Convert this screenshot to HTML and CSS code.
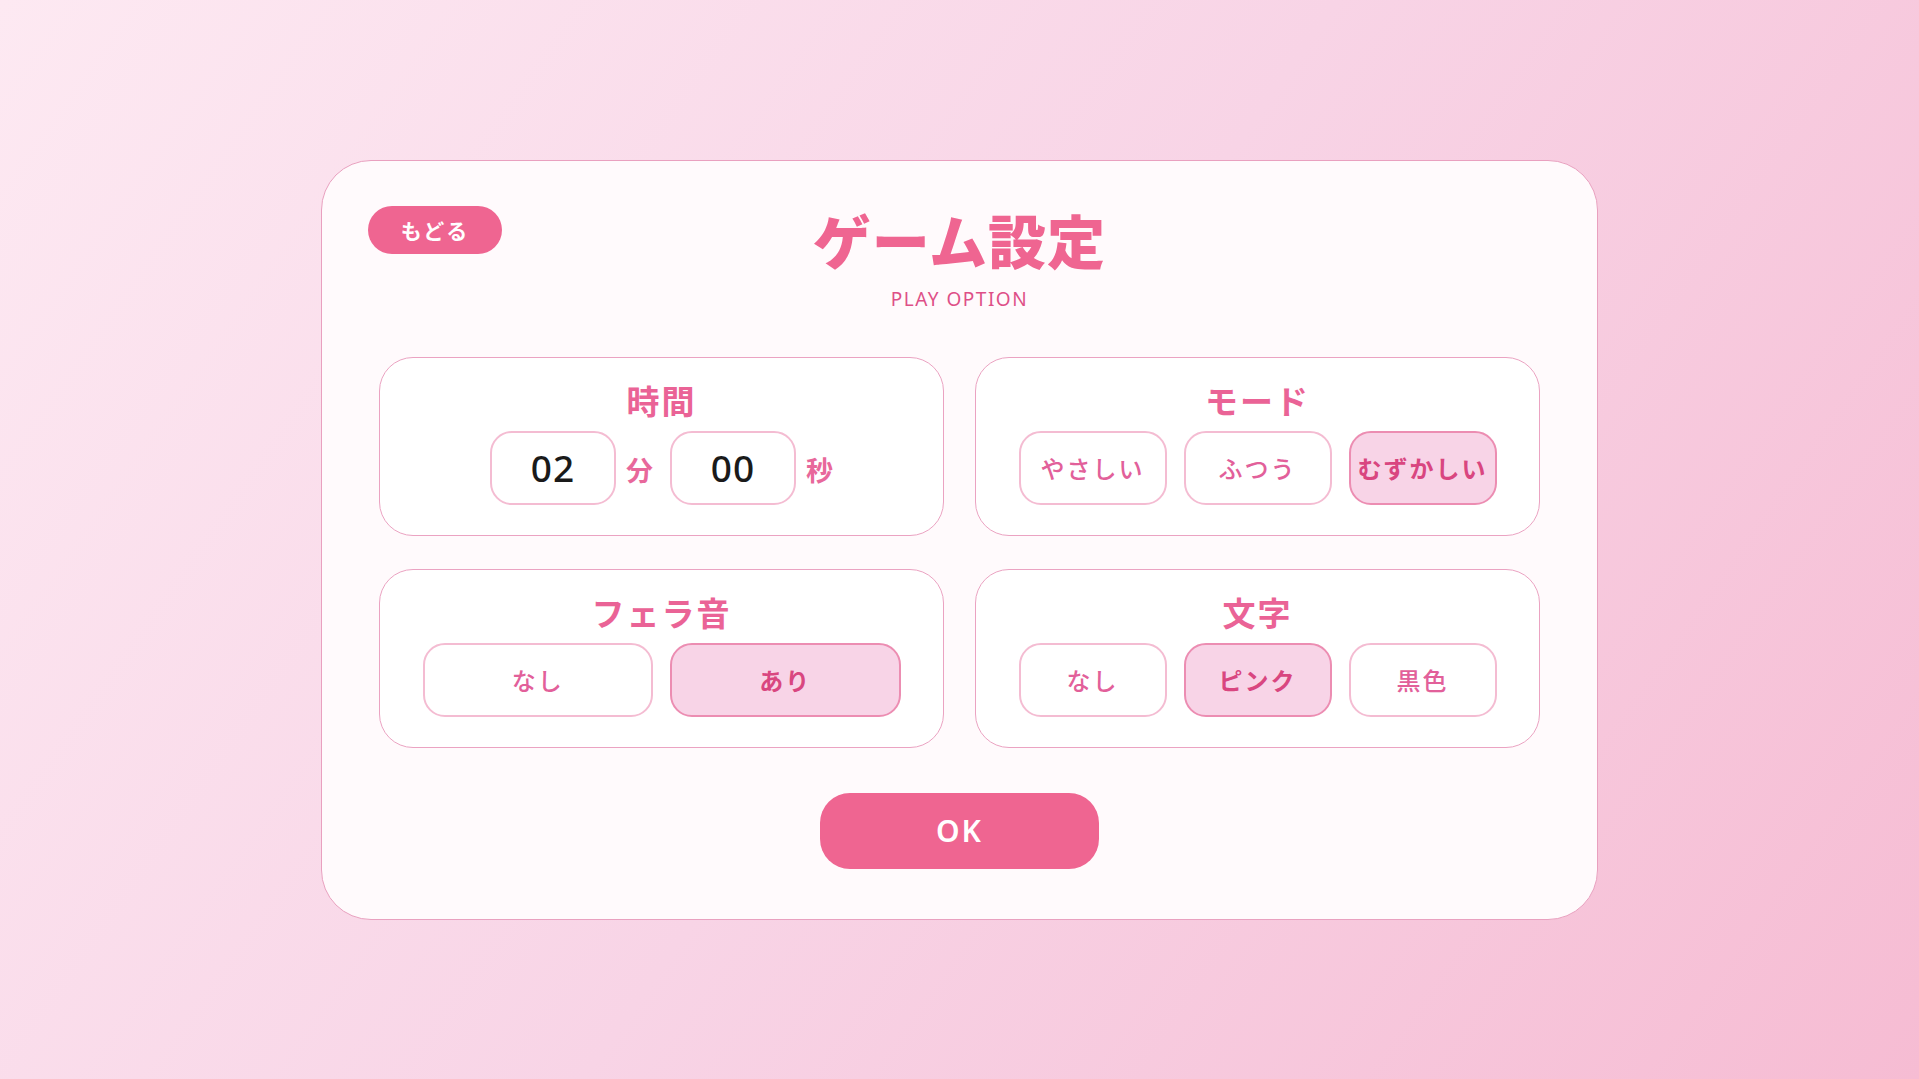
FILE: index.html
```html
<!DOCTYPE html>
<html lang="ja">
<head>
<meta charset="utf-8">
<title>ゲーム設定</title>
<link rel="stylesheet" href="styles.css">
</head>
<body>
<main class="stage">
  <section class="card">
    <button class="back">もどる</button>
    <header class="head">
      <h1 class="title">ゲーム設定</h1>
      <p class="subtitle">PLAY OPTION</p>
    </header>
    <div class="grid">
      <div class="panel">
        <h2 class="ptitle">時間</h2>
        <div class="time-row">
          <div class="num">02</div><span class="unit">分</span>
          <div class="num">00</div><span class="unit">秒</span>
        </div>
      </div>
      <div class="panel">
        <h2 class="ptitle">モード</h2>
        <div class="opts">
          <button class="opt">やさしい</button>
          <button class="opt">ふつう</button>
          <button class="opt on">むずかしい</button>
        </div>
      </div>
      <div class="panel">
        <h2 class="ptitle">フェラ音</h2>
        <div class="opts">
          <button class="opt">なし</button>
          <button class="opt on">あり</button>
        </div>
      </div>
      <div class="panel">
        <h2 class="ptitle">文字</h2>
        <div class="opts">
          <button class="opt">なし</button>
          <button class="opt on">ピンク</button>
          <button class="opt">黒色</button>
        </div>
      </div>
    </div>
    <div class="foot"><button class="ok">OK</button></div>
  </section>
</main>
</body>
</html>
```
FILE: styles.css
```css
* { box-sizing: border-box; }
html, body { margin: 0; height: 100%; }
body {
  font-family: "Noto Sans", "Noto Sans CJK JP", sans-serif;
  background: linear-gradient(125deg, #fde9f2 0%, #f8d4e6 50%, #f6bcd3 100%);
}
.stage {
  height: 100vh;
  display: flex;
  align-items: center;
  justify-content: center;
}
.card {
  position: relative;
  width: 1277px;
  height: 760px;
  background: #fffafc;
  border: 1px solid #e9a0bf;
  border-radius: 50px;
  padding: 44px 57px 0 57px;
  display: flex;
  flex-direction: column;
}
button {
  font-family: "Noto Sans CJK JP", sans-serif;
  cursor: pointer;
}
.back {
  position: absolute;
  left: 46px;
  top: 45px;
  width: 134px;
  height: 48px;
  border: none;
  border-radius: 24px;
  background: #ef6591;
  color: #fff;
  font-size: 21px;
  font-weight: 700;
  letter-spacing: 2px;
}
.head { text-align: center; }
.title {
  margin: 0;
  font-family: "Noto Sans CJK JP", sans-serif;
  font-size: 58px;
  line-height: 68px;
  font-weight: 900;
  color: #ef6591;
  letter-spacing: 1px;
}
.subtitle {
  margin: 14px 0 0;
  font-size: 19px;
  line-height: 24px;
  letter-spacing: 1.5px;
  color: #de4f87;
}
.grid {
  margin-top: 46px;
  display: grid;
  grid-template-columns: 1fr 1fr;
  column-gap: 31px;
  row-gap: 33px;
}
.panel {
  height: 179px;
  background: #fff;
  border: 1px solid #eba3c2;
  border-radius: 34px;
  padding-top: 22px;
  display: flex;
  flex-direction: column;
  align-items: center;
}
.ptitle {
  margin: 0;
  font-family: "Noto Sans CJK JP", sans-serif;
  font-size: 33px;
  line-height: 40px;
  font-weight: 700;
  color: #ea6396;
  letter-spacing: 2px;
}
.time-row {
  margin-top: 11px;
  display: flex;
  align-items: center;
}
.num {
  width: 126px;
  height: 74px;
  border: 2px solid #f4bcd2;
  border-radius: 22px;
  background: #fff;
  display: flex;
  align-items: center;
  justify-content: center;
  font-family: "Noto Sans", sans-serif;
  font-size: 37px;
  font-weight: 500;
  color: #1a1a1a;
  letter-spacing: 1px;
}
.unit {
  font-family: "Noto Sans CJK JP", sans-serif;
  font-size: 27px;
  font-weight: 700;
  color: #e8689b;
  margin: 4px 17px 0 10px;
}
.unit:last-child { margin-right: 0; }
.opts {
  margin-top: 11px;
  width: 478px;
  display: flex;
  gap: 17px;
}
.opt {
  flex: 1;
  height: 74px;
  border: 2px solid #f4bcd2;
  border-radius: 22px;
  background: #fff;
  color: #e2609a;
  font-size: 24px;
  font-weight: 500;
  letter-spacing: 2px;
}
.opt.on {
  background: #f8d4e7;
  border-color: #ec8db2;
  color: #d94680;
  font-weight: 700;
}
.foot {
  margin-top: 45px;
  display: flex;
  justify-content: center;
}
.ok {
  width: 279px;
  height: 76px;
  border: none;
  border-radius: 30px;
  background: #ef6591;
  color: #fff;
  font-family: "Noto Sans", sans-serif;
  font-size: 30px;
  font-weight: 600;
  letter-spacing: 2px;
}
```
